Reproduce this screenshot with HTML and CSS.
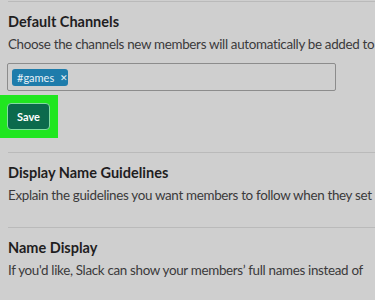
FILE: index.html
```html
<!DOCTYPE html>
<html lang="en">

<head>
    <meta charset="UTF-8">
    <meta name="viewport" content="width=device-width, initial-scale=1.0">
    <title>Workspace Settings</title>
    <link rel="stylesheet" href="styles.css">
</head>

<body>
    <div class="settings">
        <section class="section first">
            <h2>Default Channels</h2>
            <p>Choose the channels new members will automatically be added to</p>
            <div class="channel-input">
                <span class="tag">#games <span class="tag-x">&#x2715;</span></span>
            </div>
            <div class="highlight">
                <button type="button" class="save">Save</button>
            </div>
        </section>

        <section class="section">
            <h2>Display Name Guidelines</h2>
            <p>Explain the guidelines you want members to follow when they set</p>
        </section>

        <section class="section">
            <h2>Name Display</h2>
            <p>If you'd like, Slack can show your members&#8217; full names instead of</p>
        </section>
    </div>
</body>

</html>
```

FILE: styles.css
```css
body {
    margin: 0;
    background: #cfcfcf;
    font-family: Lato, "Open Sans", sans-serif;
    color: #1d1c1d;
    overflow: hidden;
}

.settings {
    width: 367px;
    margin: 1px 0 0 8px;
}

.section {
    border-top: 1px solid #bababa;
    padding: 10px 0 22px 0;
}

.section.first {
    padding-bottom: 14px;
}

h2 {
    font-size: 14.5px;
    font-weight: bold;
    margin: 0;
    line-height: 20px;
    color: #1f1e1f;
}

p {
    font-size: 13.4px;
    letter-spacing: -0.32px;
    margin: 3px 0 0 0;
    line-height: 19px;
    white-space: nowrap;
    color: #3b3a3b;
}

.channel-input {
    margin: 9px 0 0 -1px;
    width: 323px;
    height: 26px;
    border: 1px solid #8c8c8c;
    border-radius: 2px;
    display: flex;
    align-items: center;
    padding-left: 4px;
}

.tag {
    background: #1e7cab;
    color: #e6f1f7;
    font-size: 11px;
    padding: 0 5px 0 5px;
    border-radius: 3px;
    display: flex;
    align-items: center;
    gap: 6px;
    width: 46px;
    height: 17px;
}

.tag-x {
    font-size: 9px;
}

.highlight {
    margin: 4px 0 0 -8px;
    width: 51px;
    height: 35px;
    padding: 8px 0 0 7px;
    background: #20e620;
}

.save {
    width: 43px;
    height: 27px;
    background: #0c6a4c;
    border: 1px solid #82dca0;
    border-radius: 4px;
    color: #ffffff;
    font-family: Lato, sans-serif;
    font-weight: bold;
    font-size: 11px;
    padding: 0;
}
```
